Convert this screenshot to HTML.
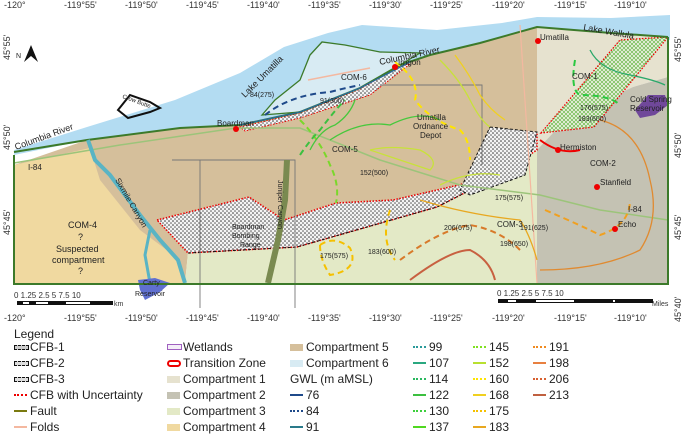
<!DOCTYPE html><html><head><meta charset="utf-8"><style>
body{margin:0;width:685px;height:431px;background:#fff;overflow:hidden;font-family:"Liberation Sans",Arial,sans-serif}
svg{position:absolute;left:0;top:0}
.lg{position:absolute;font-size:12px;color:#222;white-space:nowrap;line-height:14px}
.ic{position:absolute;width:13px;height:5px}
</style></head><body>
<svg width="685" height="431" viewBox="0 0 685 431">
<defs>
<pattern id="dots" width="4" height="4" patternUnits="userSpaceOnUse"><rect width="4" height="4" fill="#f4f4f4"/><circle cx="1" cy="1" r="0.8" fill="#333"/><circle cx="3" cy="3" r="0.8" fill="#555"/></pattern>
<pattern id="grid" width="4" height="4" patternUnits="userSpaceOnUse"><rect width="4" height="4" fill="#eef3e4"/><path d="M0 0L4 4M4 0L0 4" stroke="#6cb84c" stroke-width="0.7"/></pattern>
</defs>
<path d="M14 150 L87 127 L175 100 L240 73 L284 47 L328 33 L362 25 L437 30 L502 23 L537 17 L611 18 L670 15 L670 40 L611 33 L537 27 L480 43 L430 55 L400 65 L360 88 L300 112 L240 125 L180 128 L87 140 L14 155Z" fill="#b3dcf2"/>
<path d="M262 115 L275 100 L300 80 L310 55 L322 42 L345 45 L380 52 L420 53 L400 65 L360 88 L300 112Z" fill="#d8ebf3" stroke="#3c7a2a" stroke-width="1.3"/>
<path d="M14 165 L87 140 L180 128 L240 125 L300 112 L360 88 L400 65 L430 55 L480 43 L537 27 L537 133 L493 177 L437 190 L393 200 L336 203 L284 220 L249 197 L157 220 L188 253 L185 283 L14 283Z" fill="#d5bf9b"/>
<path d="M14 165 L90 148 L100 180 L140 230 L180 260 L185 283 L14 283Z" fill="#f0d9a0"/>
<path d="M188 253 L297 247 L367 227 L437 207 L490 180 L537 150 L537 283 L185 283Z" fill="#e3e9c6"/>
<path d="M537 27 L611 33 L668 37 L668 77 L633 87 L568 117 L537 150Z" fill="#e6e2cf"/>
<path d="M537 150 L568 117 L633 87 L668 77 L668 283 L537 283Z" fill="#c4c2b3"/>
<path d="M157 220 L249 197 L284 220 L336 203 L393 200 L437 190 L493 177 L537 133 L537 150 L490 180 L437 207 L367 227 L297 247 L188 253Z" fill="url(#dots)" stroke="#e00" stroke-width="1.5" stroke-dasharray="1.5 1.5"/>
<path d="M188 253 L297 247 L367 227 L437 207 L490 180" fill="none" stroke="#111" stroke-dasharray="3 2"/>
<path d="M490 127 L537 132 L525 175 L470 195 L460 190Z" fill="url(#dots)" stroke="#111" stroke-dasharray="3 2"/>
<path d="M240 127 L300 113 L360 89 L400 66 L410 64 L370 95 L300 118 L245 131Z" fill="url(#dots)" stroke="#e00" stroke-dasharray="1.5 1.5"/>
<path d="M541 133 L620 40 L668 37 L594 127Z" fill="url(#grid)" stroke="#e00" stroke-width="1.3" stroke-dasharray="1.5 1.5"/>
<path d="M14 152 L87 140 L180 128 L240 125 L300 112 L360 88 L400 65 L430 55 L480 43 L537 27 L611 33 L668 37" fill="none" stroke="#3c7a2a" stroke-width="2"/>
<path d="M240 125 L300 112 L360 88 L410 62" fill="none" stroke="#2a6a9a" stroke-width="1.3"/>
<path d="M14 163 L120 145 L236 128 L300 128 L380 160 L460 185 L540 195 L600 210 L668 220" fill="none" stroke="#9cc47a" stroke-width="1.5"/>
<path d="M172 160 L295 160 L295 308 M200 160 L200 308 M382 85 L482 85 L482 165" fill="none" stroke="#777" stroke-width="0.9"/>
<path d="M520 25 L537 283" stroke="#f4b8a0" stroke-width="1.2"/>
<path d="M308 80 L370 68" stroke="#f4b8a0" stroke-width="1.5"/>
<path d="M88 140 L95 160 L110 175 L125 195 L140 215 L160 240 L178 260 L185 283" fill="none" stroke="#5ab4c4" stroke-width="4"/>
<path d="M150 230 L145 255 L150 283" fill="none" stroke="#5ab4c4" stroke-width="3"/>
<path d="M287 160 L285 200 L278 240 L268 283" fill="none" stroke="#7a8a50" stroke-width="6"/>
<path d="M138 280 L155 278 L170 283 L160 292 L145 300 L140 290Z" fill="#6070d0"/>
<path d="M635 110 L648 95 L665 95 L668 105 L655 115 L640 118Z" fill="#70489a"/>
<path d="M118 110 L130 95 L150 102 L160 108 L150 112 L128 118Z" fill="none" stroke="#111" stroke-width="2"/>
<g fill="none" stroke-width="2">
<path d="M265 115 Q290 95 330 92 Q345 88 360 85" stroke="#1f4a8a" stroke-dasharray="6 4"/>
<path d="M300 120 Q320 140 330 165 Q340 185 336 203" stroke="#7ad82a" stroke-dasharray="6 4"/>
<path d="M310 150 Q320 130 335 125 Q350 115 355 100" stroke="#46c83c" stroke-width="1.3"/>
<path d="M300 155 Q310 140 320 130 Q335 110 345 100" stroke="#3cc040" stroke-dasharray="6 4"/>
<path d="M395 62 Q420 80 415 100 Q430 120 460 130 Q470 140 470 160" stroke="#ffe400" stroke-dasharray="6 4"/>
<path d="M440 60 Q460 80 470 100 Q480 120 490 127" stroke="#c8e23a" stroke-width="1.3"/>
<path d="M455 55 Q470 75 480 95 Q490 110 505 120" stroke="#f0d020" stroke-width="1.3"/>
<path d="M330 140 Q360 120 390 125 Q420 110 440 120" stroke="#46c83c" stroke-width="1.3"/>
<path d="M370 150 Q400 160 430 170 Q440 160 420 150 Q390 145 370 150" stroke="#c8e23a" stroke-width="1.3"/>
<path d="M320 245 Q335 235 350 248 Q360 270 330 275 Q320 260 320 245" stroke="#f5c000" stroke-dasharray="6 4"/>
<path d="M390 210 Q380 240 395 260" stroke="#f5c000" stroke-dasharray="6 4"/>
<path d="M400 260 Q440 230 470 225 Q500 230 520 250" stroke="#d87a2a" stroke-dasharray="6 4"/>
<path d="M410 280 Q450 250 470 250 Q490 260 495 280" stroke="#c86040" stroke-width="2"/>
<path d="M420 200 Q470 215 520 220 Q530 235 537 260" stroke="#e8a820" stroke-width="1.3"/>
<path d="M540 270 Q600 270 640 250 Q660 220 650 180 Q640 130 600 120" stroke="#e08a30" stroke-width="1.3"/>
<path d="M545 210 Q580 225 600 235 Q630 225 630 200" stroke="#f0a020" stroke-dasharray="6 4"/>
<path d="M590 50 Q600 70 630 75 Q655 80 665 85" stroke="#2aa86a" stroke-width="1.3"/>
<path d="M575 60 Q570 90 580 95 Q610 95 620 105" stroke="#2ac840" stroke-dasharray="6 4"/>
<path d="M540 140 Q560 155 580 150" stroke="#e00" stroke-width="2"/>
<path d="M440 185 Q470 170 500 175" stroke="#c8e23a" stroke-width="1.3"/>
</g>
<path d="M14 155 L14 284 L668 284 L668 37" fill="none" stroke="#3c7a2a" stroke-width="2"/>
<g fill="#e00"><circle cx="236" cy="129" r="3"/><circle cx="395" cy="67" r="3"/><circle cx="538" cy="41" r="3"/><circle cx="558" cy="150" r="3"/><circle cx="597" cy="187" r="3"/><circle cx="615" cy="229" r="3"/></g>
<g font-family="Liberation Sans,Arial,sans-serif" font-size="8" fill="#222">
<text x="540" y="40">Umatilla</text><text x="560" y="150">Hermiston</text><text x="600" y="185">Stanfield</text><text x="618" y="227">Echo</text>
<text x="217" y="126">Boardman</text><text x="398" y="65">Irrigon</text>
<text x="341" y="80">COM-6</text><text x="332" y="152">COM-5</text><text x="590" y="166">COM-2</text><text x="497" y="227">COM-3</text><text x="572" y="79">COM-1</text>
<text x="417" y="120">Umatilla</text><text x="413" y="129">Ordnance</text><text x="420" y="138">Depot</text>
<text x="232" y="229" font-size="7">Boardman</text><text x="232" y="238" font-size="7">Bombing</text><text x="240" y="247" font-size="7">Range</text>
<text x="68" y="228" font-size="9">COM-4</text><text x="78" y="240" font-size="9">?</text><text x="56" y="252" font-size="9">Suspected</text><text x="52" y="263" font-size="9">compartment</text><text x="78" y="274" font-size="9">?</text>
<text x="630" y="102" font-size="8">Cold Spring</text><text x="630" y="111" font-size="8">Reservoir</text>
<text x="628" y="212">I-84</text><text x="28" y="170">I-84</text>
<text transform="translate(16,150) rotate(-20)" font-size="9">Columbia River</text>
<text transform="translate(380,65) rotate(-12)" font-size="9">Columbia River</text>
<text transform="translate(245,98) rotate(-45)" font-size="9">Lake Umatilla</text>
<text transform="translate(583,30) rotate(10)" font-size="9">Lake Wallula</text>
<text transform="translate(115,180) rotate(60)" font-size="8">Sixmile Canyon</text>
<text transform="translate(278,180) rotate(90)" font-size="7">Juniper Canyon</text>
<text transform="translate(122,98) rotate(20)" font-size="6">Crow Butte</text>
<text x="143" y="285" font-size="7">Carty</text><text x="135" y="296" font-size="7">Reservoir</text>
<text x="360" y="175" font-size="7">152(500)</text><text x="250" y="97" font-size="7">84(275)</text><text x="320" y="103" font-size="7">91(300)</text>
<text x="444" y="230" font-size="7">206(675)</text><text x="520" y="230" font-size="7">191(625)</text><text x="320" y="258" font-size="7">175(575)</text>
<text x="495" y="200" font-size="7">175(575)</text><text x="578" y="121" font-size="7">183(600)</text><text x="580" y="110" font-size="7">176(575)</text>
<text x="368" y="254" font-size="7">183(600)</text><text x="500" y="246" font-size="7">198(650)</text>
<text x="16" y="58" font-size="7">N</text>
</g>
<path d="M24 62 L31 45 L38 62 L31 56Z" fill="#111"/>
<g font-family="Liberation Sans,Arial,sans-serif" font-size="9" fill="#333">
<text x="4" y="8">-120°</text><text x="64" y="8">-119°55'</text><text x="125" y="8">-119°50'</text><text x="186" y="8">-119°45'</text><text x="247" y="8">-119°40'</text><text x="308" y="8">-119°35'</text><text x="369" y="8">-119°30'</text><text x="430" y="8">-119°25'</text><text x="492" y="8">-119°20'</text><text x="554" y="8">-119°15'</text><text x="614" y="8">-119°10'</text>
<text x="4" y="321">-120°</text><text x="64" y="321">-119°55'</text><text x="125" y="321">-119°50'</text><text x="186" y="321">-119°45'</text><text x="247" y="321">-119°40'</text><text x="308" y="321">-119°35'</text><text x="369" y="321">-119°30'</text><text x="430" y="321">-119°25'</text><text x="492" y="321">-119°20'</text><text x="554" y="321">-119°15'</text><text x="614" y="321">-119°10'</text>
<text transform="translate(10,60) rotate(-90)">45°55'</text><text transform="translate(10,150) rotate(-90)">45°50'</text><text transform="translate(10,235) rotate(-90)">45°45'</text>
<text transform="translate(681,62) rotate(-90)">45°55'</text><text transform="translate(681,158) rotate(-90)">45°50'</text><text transform="translate(681,240) rotate(-90)">45°45'</text><text transform="translate(681,322) rotate(-90)">45°40'</text>
<text x="14" y="298" font-size="8">0 1.25 2.5   5   7.5   10</text>
<text x="497" y="296" font-size="8">0  1.25  2.5      5       7.5      10</text>
<text x="652" y="306" font-size="7">Miles</text><text x="114" y="306" font-size="7">km</text>
</g>
<g><rect x="17" y="301" width="96" height="4" fill="#111"/><rect x="23" y="302" width="6" height="2" fill="#fff"/><rect x="36" y="302" width="12" height="2" fill="#fff"/><rect x="66" y="302" width="24" height="2" fill="#fff"/>
<rect x="498" y="299" width="155" height="4" fill="#111"/><rect x="508" y="300" width="8" height="2" fill="#fff"/><rect x="536" y="300" width="38" height="2" fill="#fff"/><rect x="613" y="300" width="2" height="2" fill="#fff"/></g>
</svg>
<div class="lg" style="left:14px;top:327px">Legend</div>
<div class="ic" style="left:14px;top:345px;border:1px dashed #111;height:3px;background:#ccc"></div><div class="lg" style="left:30px;top:340px">CFB-1</div>
<div class="ic" style="left:14px;top:361px;border:1px dashed #111;height:3px;background:#ddd"></div><div class="lg" style="left:30px;top:356px">CFB-2</div>
<div class="ic" style="left:14px;top:377px;border:1px dashed #111;height:3px;background:#ddd"></div><div class="lg" style="left:30px;top:372px">CFB-3</div>
<div class="ic" style="left:14px;top:394px;border-top:2px dotted #e00;height:0"></div><div class="lg" style="left:30px;top:388px">CFB with Uncertainty</div>
<div class="ic" style="left:14px;top:410px;border-top:2px solid #7a7a10;height:0"></div><div class="lg" style="left:30px;top:404px">Fault</div>
<div class="ic" style="left:14px;top:426px;border-top:2px solid #f4b8a0;height:0"></div><div class="lg" style="left:30px;top:420px">Folds</div>
<div class="ic" style="left:167px;top:344px;border:1px solid #a060c0;height:4px;background:#f4eef8"></div><div class="lg" style="left:183px;top:340px">Wetlands</div>
<div class="ic" style="left:167px;top:360px;border:2px solid #e00;border-radius:6px;height:3px;width:10px"></div><div class="lg" style="left:183px;top:356px">Transition Zone</div>
<div class="ic" style="left:167px;top:376px;height:7px;background:#e6e2cf"></div><div class="lg" style="left:183px;top:372px">Compartment 1</div>
<div class="ic" style="left:167px;top:392px;height:7px;background:#c4c2b3"></div><div class="lg" style="left:183px;top:388px">Compartment 2</div>
<div class="ic" style="left:167px;top:408px;height:7px;background:#e3e9c6"></div><div class="lg" style="left:183px;top:404px">Compartment 3</div>
<div class="ic" style="left:167px;top:424px;height:7px;background:#f0d9a0"></div><div class="lg" style="left:183px;top:420px">Compartment 4</div>
<div class="ic" style="left:290px;top:344px;height:7px;background:#d5bf9b"></div><div class="lg" style="left:306px;top:340px">Compartment 5</div>
<div class="ic" style="left:290px;top:360px;height:7px;background:#d8ebf3"></div><div class="lg" style="left:306px;top:356px">Compartment 6</div>
<div class="lg" style="left:290px;top:372px">GWL (m aMSL)</div>
<div class="ic" style="left:290px;top:394px;border-top:2px solid #1f4a8a;height:0"></div><div class="lg" style="left:306px;top:388px">76</div>
<div class="ic" style="left:290px;top:410px;border-top:2px dotted #1f4a8a;height:0"></div><div class="lg" style="left:306px;top:404px">84</div>
<div class="ic" style="left:290px;top:426px;border-top:2px solid #2a7a8a;height:0"></div><div class="lg" style="left:306px;top:420px">91</div>
<div class="ic" style="left:413px;top:346px;border-top:2px dotted #2a9a9a;height:0"></div><div class="lg" style="left:429px;top:340px">99</div>
<div class="ic" style="left:413px;top:362px;border-top:2px solid #2aa880;height:0"></div><div class="lg" style="left:429px;top:356px">107</div>
<div class="ic" style="left:413px;top:378px;border-top:2px dotted #2ab860;height:0"></div><div class="lg" style="left:429px;top:372px">114</div>
<div class="ic" style="left:413px;top:394px;border-top:2px solid #3cc040;height:0"></div><div class="lg" style="left:429px;top:388px">122</div>
<div class="ic" style="left:413px;top:410px;border-top:2px dotted #3cd03c;height:0"></div><div class="lg" style="left:429px;top:404px">130</div>
<div class="ic" style="left:413px;top:426px;border-top:2px solid #50d820;height:0"></div><div class="lg" style="left:429px;top:420px">137</div>
<div class="ic" style="left:473px;top:346px;border-top:2px dotted #80e020;height:0"></div><div class="lg" style="left:489px;top:340px">145</div>
<div class="ic" style="left:473px;top:362px;border-top:2px solid #b8e030;height:0"></div><div class="lg" style="left:489px;top:356px">152</div>
<div class="ic" style="left:473px;top:378px;border-top:2px dotted #ffe400;height:0"></div><div class="lg" style="left:489px;top:372px">160</div>
<div class="ic" style="left:473px;top:394px;border-top:2px solid #f0d020;height:0"></div><div class="lg" style="left:489px;top:388px">168</div>
<div class="ic" style="left:473px;top:410px;border-top:2px dotted #f5c000;height:0"></div><div class="lg" style="left:489px;top:404px">175</div>
<div class="ic" style="left:473px;top:426px;border-top:2px solid #e8a820;height:0"></div><div class="lg" style="left:489px;top:420px">183</div>
<div class="ic" style="left:533px;top:346px;border-top:2px dotted #f08a20;height:0"></div><div class="lg" style="left:549px;top:340px">191</div>
<div class="ic" style="left:533px;top:362px;border-top:2px solid #e88040;height:0"></div><div class="lg" style="left:549px;top:356px">198</div>
<div class="ic" style="left:533px;top:378px;border-top:2px dotted #d86030;height:0"></div><div class="lg" style="left:549px;top:372px">206</div>
<div class="ic" style="left:533px;top:394px;border-top:2px solid #c06040;height:0"></div><div class="lg" style="left:549px;top:388px">213</div>
</body></html>
